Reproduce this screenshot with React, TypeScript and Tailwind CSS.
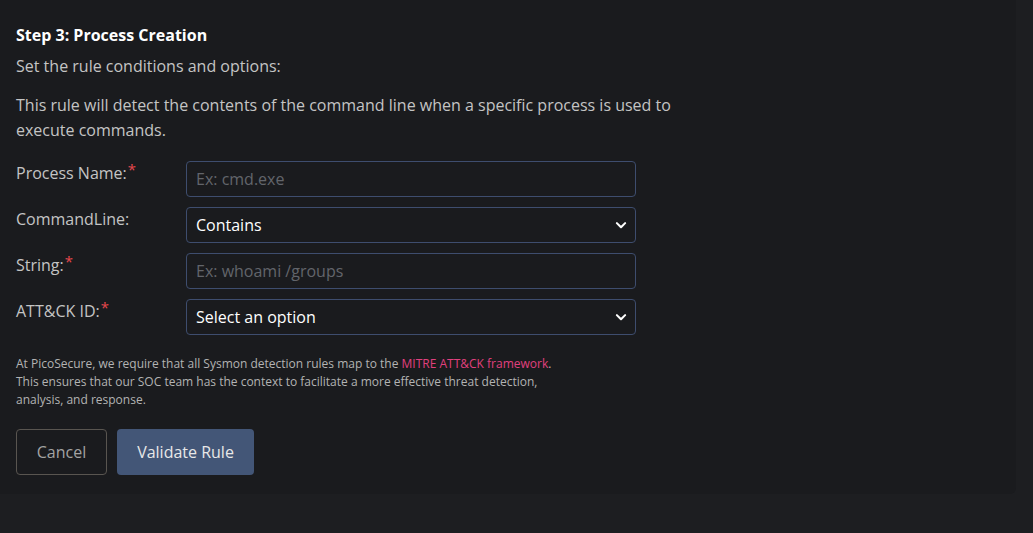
import React from "react";

const Req = () => <sup className="text-[#e5484d] text-[15px] relative top-[-4px] ml-[1px]">*</sup>;

const Chevron = () => (
  <svg className="absolute right-[9px] top-1/2 -translate-y-1/2 w-[12px] h-[12px] pointer-events-none" viewBox="0 0 16 16" fill="none">
    <path d="M2.5 5.5l5.5 5.5 5.5-5.5" stroke="#fff" strokeWidth="2.8" strokeLinecap="round" strokeLinejoin="round" />
  </svg>
);

const fieldCls =
  "w-full h-[36px] rounded-[4px] border border-[#3e4d6e] bg-[#1a1b1e] px-[9px] text-[16px] text-white outline-none";

export default function App() {
  return (
    <div className="min-h-screen bg-[#1d1e21] font-['Open_Sans','Noto_Sans',sans-serif]">
      <div className="w-[1016px] rounded-br-[6px] bg-[#1a1b1e] px-[16px] pt-[24px] pb-[19px] text-[#c4c4c4]">
        <h2 className="text-[16px] font-bold leading-[22px] text-white">Step 3: Process Creation</h2>
        <p className="mt-[8px] text-[16px] leading-[24px]">Set the rule conditions and options:</p>
        <p className="mt-[15px] max-w-[680px] text-[16px] leading-[25px]">
          This rule will detect the contents of the command line when a specific process is used to execute
          commands.
        </p>

        <div className="mt-[18px] flex flex-col gap-[10px]">
          <div className="flex">
            <label className="w-[170px] pt-[1px] leading-[22px]">Process Name:<Req /></label>
            <div className="w-[450px]">
              <input className={fieldCls + " placeholder:text-[#62656b]"} placeholder="Ex: cmd.exe" />
            </div>
          </div>
          <div className="flex">
            <label className="w-[170px] pt-[1px] leading-[22px]">CommandLine:</label>
            <div className="relative w-[450px]">
              <select className={fieldCls + " appearance-none"} defaultValue="contains">
                <option value="contains">Contains</option>
                <option value="is">Is</option>
              </select>
              <Chevron />
            </div>
          </div>
          <div className="flex">
            <label className="w-[170px] pt-[1px] leading-[22px]">String:<Req /></label>
            <div className="w-[450px]">
              <input className={fieldCls + " placeholder:text-[#62656b]"} placeholder="Ex: whoami /groups" />
            </div>
          </div>
          <div className="flex">
            <label className="w-[170px] pt-[1px] leading-[22px]">ATT&amp;CK ID:<Req /></label>
            <div className="relative w-[450px]">
              <select className={fieldCls + " appearance-none"} defaultValue="">
                <option value="">Select an option</option>
              </select>
              <Chevron />
            </div>
          </div>
        </div>

        <p className="mt-[20px] max-w-[560px] text-[12px] leading-[18px] text-[#b3b3b3]">
          At PicoSecure, we require that all Sysmon detection rules map to the{" "}
          <a className="text-[#e0407e]">MITRE ATT&amp;CK framework</a>. This ensures that our SOC team has the
          context to facilitate a more effective threat detection, analysis, and response.
        </p>

        <div className="mt-[20px] flex gap-[10px]">
          <button className="h-[46px] w-[91px] rounded-[4px] border border-[#595550] text-[16px] text-[#a3a3a3]">
            Cancel
          </button>
          <button className="h-[46px] w-[137px] rounded-[4px] bg-[#435677] text-[16px] text-[#e8e8e8]">
            Validate Rule
          </button>
        </div>
      </div>
    </div>
  );
}
